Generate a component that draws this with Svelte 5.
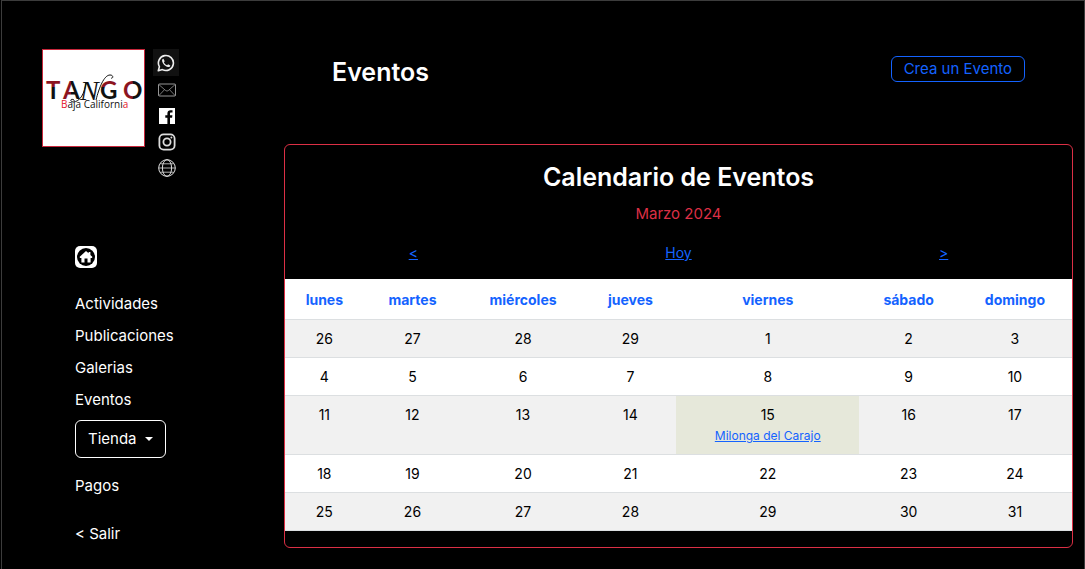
<script>
  const days = ['lunes', 'martes', 'miércoles', 'jueves', 'viernes', 'sábado', 'domingo'];
  const widths = [10, 12.4, 15.7, 11.6, 23.3, 12.5, 14.5];
  const weeks = [
    [26, 27, 28, 29, 1, 2, 3],
    [4, 5, 6, 7, 8, 9, 10],
    [11, 12, 13, 14, 15, 16, 17],
    [18, 19, 20, 21, 22, 23, 24],
    [25, 26, 27, 28, 29, 30, 31]
  ];
  const events = { '2-15': 'Milonga del Carajo' };
</script>

<div class="page">
  <aside>
    <div class="brand">
      <svg class="logo" viewBox="0 0 103 98" role="img" aria-label="Tango Baja California">
        <defs>
          <linearGradient id="bar" x1="0" y1="0" x2="0" y2="1">
            <stop offset=".42" stop-color="#8c1420" /><stop offset=".42" stop-color="#111" />
          </linearGradient>
          <linearGradient id="side" x1="0" y1="0" x2="1" y2="0">
            <stop offset=".48" stop-color="#8c1420" /><stop offset=".52" stop-color="#111" />
          </linearGradient>
        </defs>
        <rect x=".5" y=".5" width="102" height="97" fill="#fff" stroke="#c8283c" />
        <g class="tango">
          <text x="4" y="50" fill="url(#bar)">T</text>
          <text x="21" y="50" fill="url(#side)">A</text>
          <text x="58" y="50" fill="url(#bar)">G</text>
          <text x="81" y="50" fill="url(#side)">O</text>
        </g>
        <text class="script" x="38" y="51">N</text>
        <path d="M44 33C43 44 38 53 31 53C27 52 29 49 32 51M54 51C57 39 62 26 68 26C72 26 71 30 69 29" fill="none" stroke="#111" stroke-width="1" />
        <text class="place" x="19" y="59"><tspan fill="#e3142a">B</tspan>aja Californi<tspan fill="#e3142a">a</tspan></text>
      </svg>
      <div class="social">
        <a href="#whatsapp" class="tile" aria-label="WhatsApp">
          <svg width="18" height="18" viewBox="0 0 18 18"><path d="M1.3 16.7l1.1-4A7.5 7.5 0 1 1 5.400 15.600Z" fill="none" stroke="#eee" stroke-width="1.600" stroke-linejoin="round" /><path d="M6.400 4.800c-1 .3-1.500 1.200-1.300 2.300.5 2.900 3.200 5.500 5.900 5.900 1.200.2 2.200-.5 2.300-1.600l-2.200-1.200-1 1.100C8.700 10.800 7.500 9.600 6.900 8.200l.8-1Z" fill="#eee" /></svg>
        </a>
        <a href="#correo" class="mail" aria-label="Correo">
          <svg width="18" height="14" viewBox="0 0 18 14"><rect x=".5" y="1" width="17" height="12" rx="1" fill="none" stroke="#bbb" stroke-width=".8" /><path d="M.8 1.500l6.800 6q1.400 1.200 2.800 0L17.200 1.500M.8 12.700L6.500 6.700M17.200 12.700L11.500 6.700" fill="none" stroke="#aaa" stroke-width=".7" /></svg>
        </a>
        <a href="#facebook" aria-label="Facebook">
          <svg width="16" height="16" viewBox="0 0 16 16"><rect width="16" height="16" fill="#fff" /><path d="M8.400 16V9.800H6.300V7.300h2.100V5.500C8.400 3.300 9.700 2.200 11.600 2.200h1.900v2.300h-1.300c-1 0-1.200.5-1.200 1.200v1.600h2.400l-.3 2.500H11V16Z" fill="#050505" /></svg>
        </a>
        <a href="#instagram" aria-label="Instagram">
          <svg width="18" height="18" viewBox="0 0 18 18" fill="none" stroke="#ddd" stroke-width="1.800"><rect x="1.400" y="1.400" width="15.200" height="15.200" rx="4.200" /><circle cx="9" cy="9" r="3.600" /><circle cx="13.400" cy="4.600" r="1" fill="#ddd" stroke="none" /></svg>
        </a>
        <a href="#web" class="web" aria-label="Sitio web">
          <svg width="18" height="18" viewBox="0 0 18 18" fill="none" stroke="#ddd"><circle cx="9" cy="9" r="8.300" /><ellipse cx="9" cy="9" rx="4.600" ry="8.300" /><path d="M.7 9h16.600M2.200 4.800h13.600M2.200 13.200h13.600" stroke-width=".8" /></svg>
        </a>
      </div>
    </div>

    <nav>
      <a href="#inicio" class="home" aria-label="Inicio">
        <svg width="22" height="22" viewBox="0 0 22 22"><rect width="22" height="22" rx="5" fill="#fff" /><circle cx="11" cy="11" r="9" fill="#000" /><path d="M11 5l2.600 2.300V6h1.800v2.900L17.500 11l-.7.900h-1.200V16.500h-3.100v-4h-3v4H6.400v-4.600H5.200L4.500 11Z" fill="#fff" /></svg>
      </a>
      <a href="#actividades">Actividades</a>
      <a href="#publicaciones">Publicaciones</a>
      <a href="#galerias">Galerias</a>
      <a href="#eventos">Eventos</a>
      <button class="shop" type="button">Tienda <span class="caret"></span></button>
      <a href="#pagos">Pagos</a>
      <a href="#salir" class="exit">&lt; Salir</a>
    </nav>
  </aside>

  <main>
    <header>
      <h1>Eventos</h1>
      <button class="create" type="button">Crea un Evento</button>
    </header>

    <section class="card">
      <h2>Calendario de Eventos</h2>
      <p>Marzo 2024</p>
      <div class="pager">
        <a href="#anterior">&lt;</a>
        <a href="#hoy">Hoy</a>
        <a href="#siguiente">&gt;</a>
      </div>
      <table>
        <colgroup>
          {#each widths as w}<col style="width: {w}%" />{/each}
        </colgroup>
        <thead>
          <tr>{#each days as day}<th scope="col">{day}</th>{/each}</tr>
        </thead>
        <tbody>
          {#each weeks as week, i}
            <tr>
              {#each week as day}
                {@const event = events[`${i}-${day}`]}
                <td class:busy={event}>
                  {day}
                  {#if event}<a href="#evento">{event}</a>{/if}
                </td>
              {/each}
            </tr>
          {/each}
        </tbody>
      </table>
    </section>
  </main>
</div>

<style>
  :global(body) {
    margin: 0;
    background: #000;
  }
  .page {
    box-sizing: border-box;
    display: flex;
    min-height: 100vh;
    margin-left: 1px;
    border: 1px solid #3c3c3c;
    border-bottom: 0;
    color: #fff;
    font: 15px/24px Inter, 'Liberation Sans', sans-serif;
  }
  aside {
    box-sizing: border-box;
    flex: 0 0 282px;
    padding: 48px 0 0 40px;
  }
  .brand {
    display: flex;
    gap: 7px;
    height: 132px;
  }
  .logo {
    width: 103px;
    height: 98px;
  }
  .tango {
    font: 700 24px Lato, sans-serif;
  }
  .script {
    font: italic 28px 'Liberation Serif', serif;
    fill: #111;
  }
  .place {
    font: 10px 'Open Sans', sans-serif;
    fill: #111;
  }
  .social {
    display: flex;
    flex-direction: column;
    align-items: center;
    width: 28px;
  }
  .social a {
    display: flex;
    align-items: center;
    justify-content: center;
    width: 26px;
    height: 26px;
  }
  .social .tile {
    background: #111;
    height: 27px;
  }
  .social .mail {
    height: 27px;
    padding-left: 2px;
  }
  .social a:nth-child(n + 3) {
    padding-left: 2px;
  }
  .social .web {
    padding-left: 4px;
  }
  nav {
    display: flex;
    flex-direction: column;
    align-items: flex-start;
    gap: 8px;
    padding: 65px 0 0 33px;
  }
  nav a {
    color: #fff;
    text-decoration: none;
  }
  .home {
    height: 22px;
    margin-bottom: 16px;
  }
  .home svg {
    display: block;
  }
  button {
    font: inherit;
    background: none;
    border-radius: 6px;
  }
  .shop {
    display: flex;
    align-items: center;
    gap: 8px;
    margin-bottom: 8px;
    padding: 6px 12px;
    border: 1px solid #fff;
    color: #fff;
  }
  .caret {
    border: 4px solid transparent;
    border-top-color: #fff;
    border-bottom: 0;
  }
  .exit {
    margin-top: 16px;
  }
  main {
    flex: 1;
    padding: 55px 11px 20px 0;
  }
  header {
    display: flex;
    justify-content: space-between;
    align-items: flex-start;
    height: 88px;
    padding: 0 48px;
  }
  h1,
  h2 {
    margin: 0;
    font-size: 25px;
    line-height: 32px;
    font-weight: 600;
  }
  .create {
    padding: 0 12px;
    border: 1px solid #1463ff;
    color: #1463ff;
  }
  .card {
    padding: 16px 0;
    border: 1px solid #dc2f45;
    border-radius: 6px;
    text-align: center;
  }
  p {
    margin: 0;
    padding: 9px 0 15px;
    color: #dc2f45;
  }
  .pager {
    display: flex;
    justify-content: space-around;
    padding-bottom: 14px;
    font-size: 14px;
  }
  .pager a,
  td a {
    color: #1463ff;
  }
  table {
    width: 100%;
    table-layout: fixed;
    border-collapse: collapse;
    background: #fff;
    color: #000;
    font-size: 14px;
    line-height: 21px;
  }
  th {
    height: 40px;
    padding: 0;
    border-bottom: 1px solid #dcdfe1;
    color: #1463ff;
    font-weight: 700;
  }
  td {
    padding: 8px 0;
    border-bottom: 1px solid #dcdfe1;
    vertical-align: top;
  }
  tbody tr:nth-child(odd) {
    background: #f1f1f1;
  }
  td.busy {
    background: #e6e8da;
  }
  td a {
    display: block;
    font-size: 12px;
  }
</style>
